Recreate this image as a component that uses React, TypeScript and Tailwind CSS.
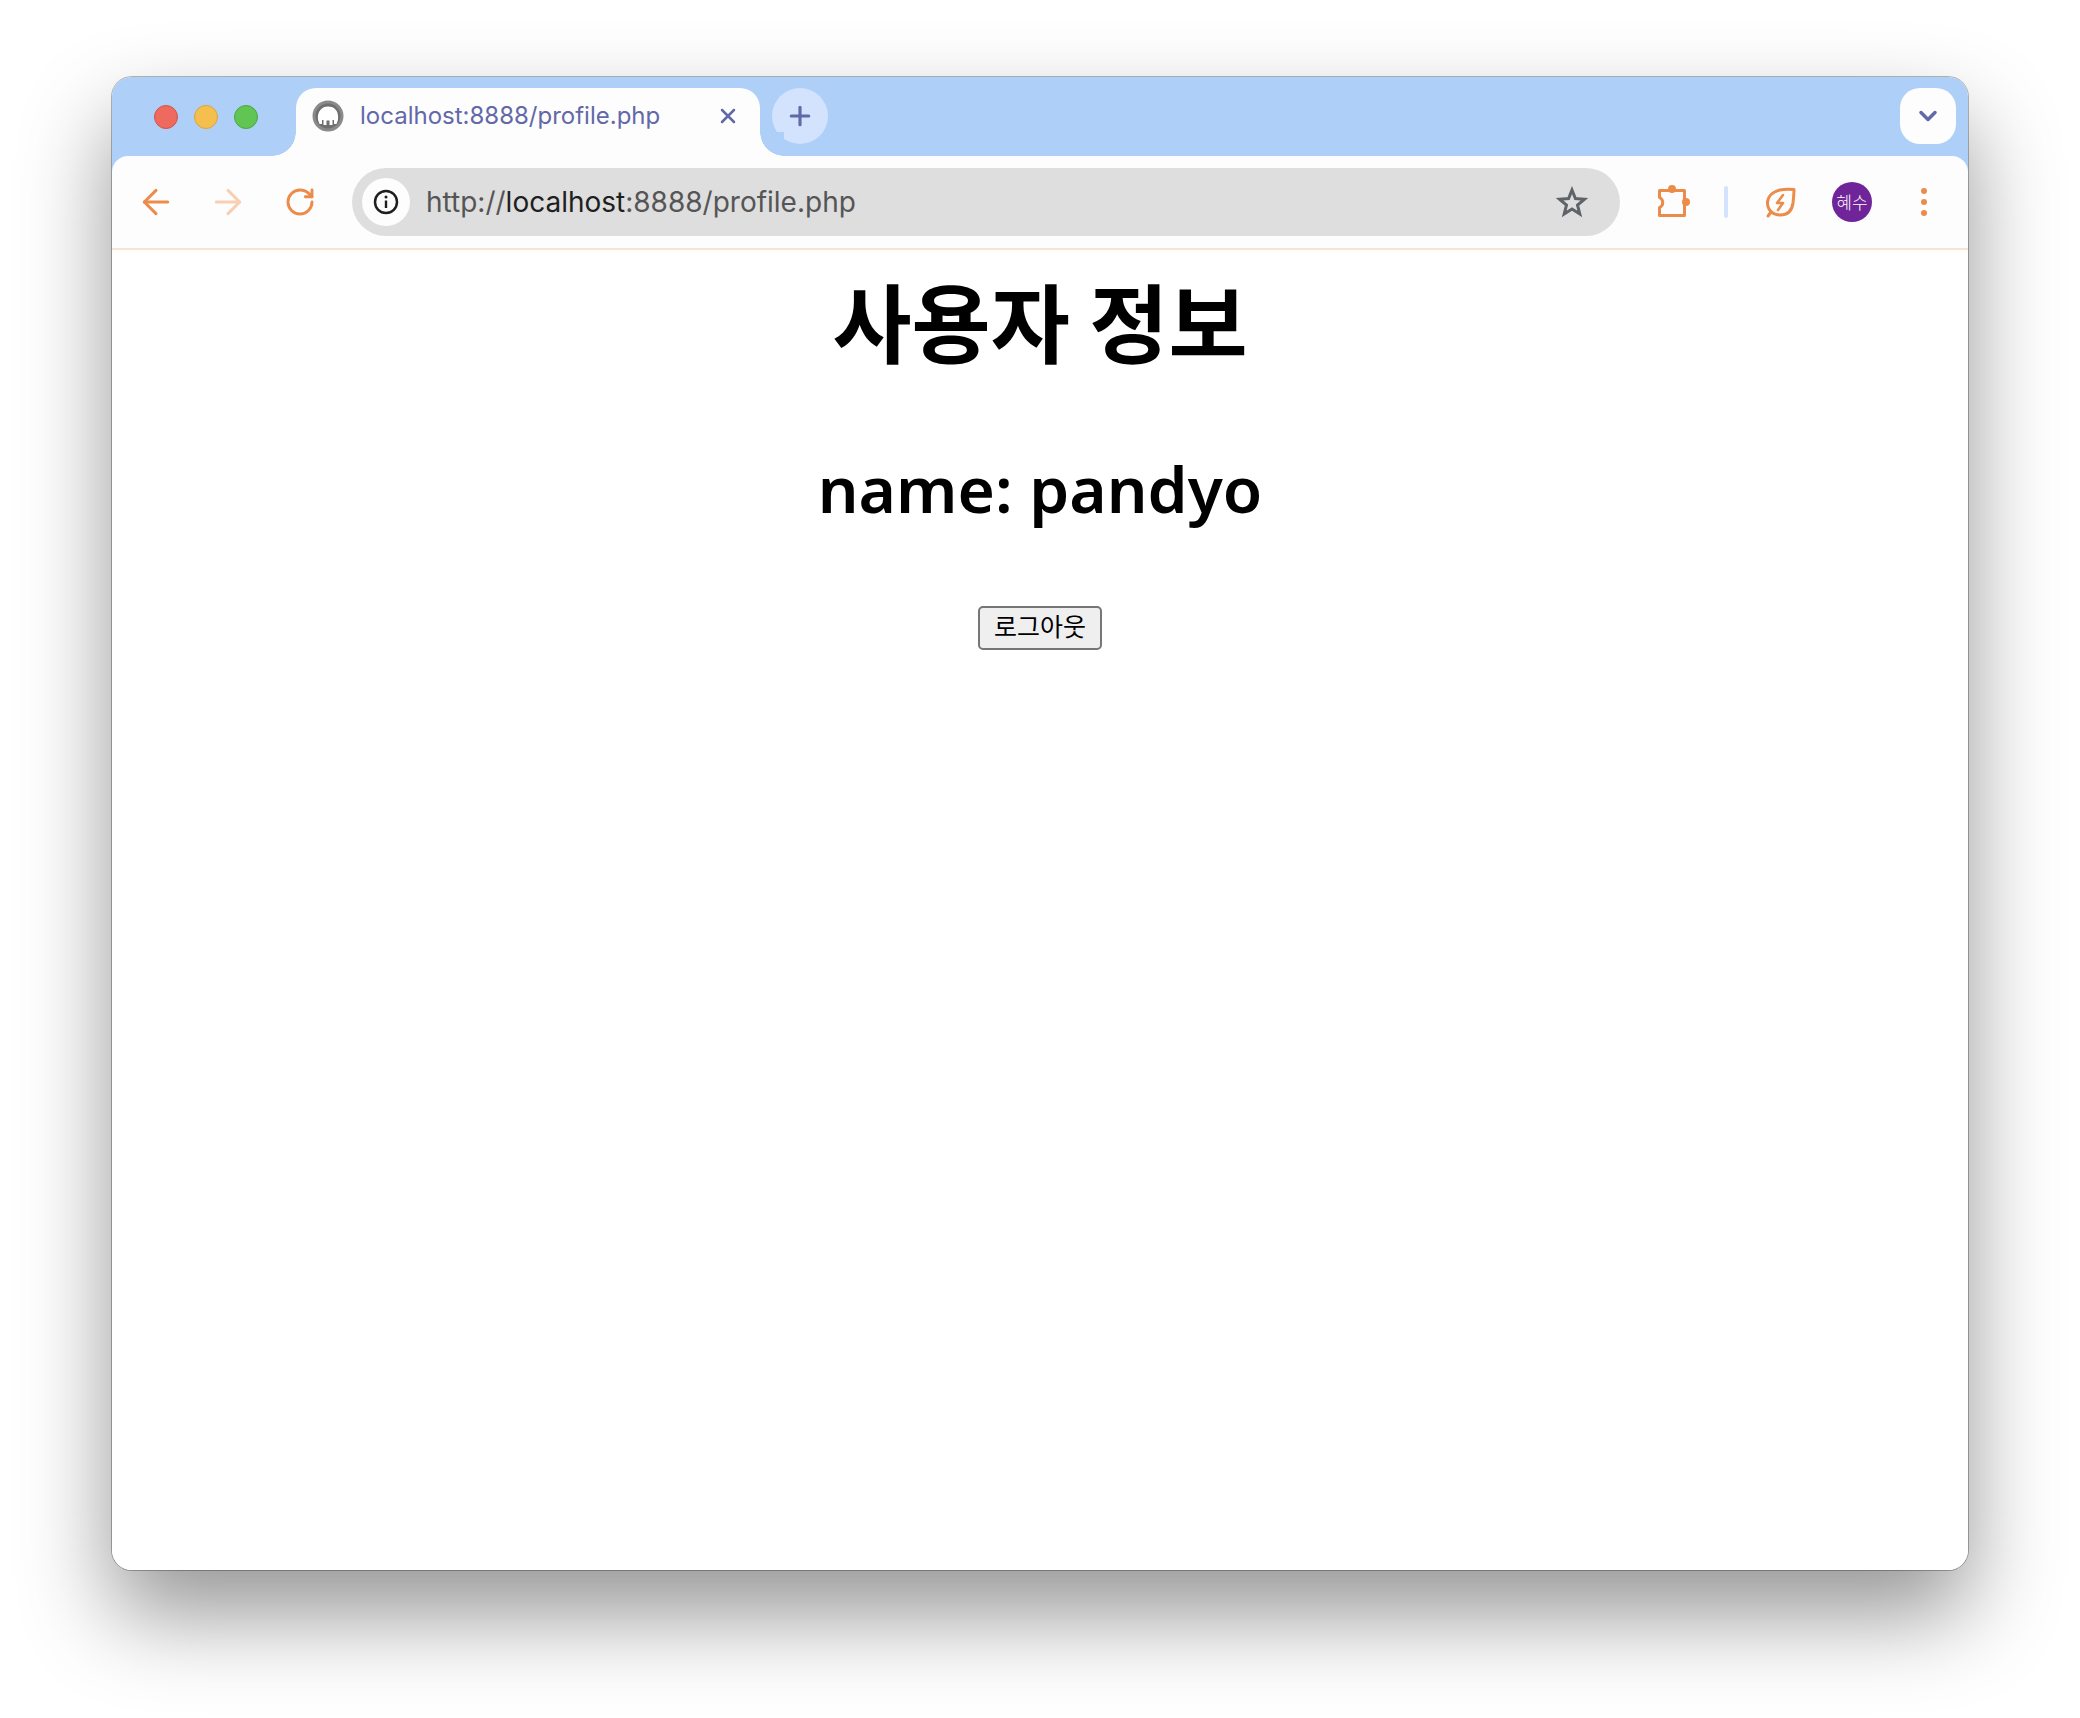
import React from "react";
import { ArrowLeft, ArrowRight, RotateCw, X, Plus, ChevronDown } from "lucide-react";

function Favicon() {
  return (
    <svg width="34" height="34" viewBox="0 0 34 34">
      <circle cx="17" cy="17" r="14" fill="#6f6f6f" stroke="#8a8a8a" strokeWidth="3" />
      <path d="M7 21 C6 12 11 7.5 17 7.5 C24 7.5 28 12 27 21 L25.5 25 H23 V21 L21.5 21 V26 H18.5 V21.5 H15.5 V26 H12.5 V21 L11 21 V25 H8.5 Z" fill="#fff" />
    </svg>
  );
}

function Puzzle() {
  return (
    <svg width="40" height="40" viewBox="0 0 40 40" fill="none">
      <path d="M7.5 8.5 H32.5 V33.5 H7.5 V25.5 A5.5 5.5 0 0 0 7.5 15.5 Z" stroke="#ec8c4b" strokeWidth="3" strokeLinejoin="round" />
      <circle cx="20" cy="7" r="4" fill="#ec8c4b" />
      <circle cx="34" cy="20" r="4" fill="#ec8c4b" />
    </svg>
  );
}

function Leaf() {
  return (
    <svg width="36" height="36" viewBox="0 0 36 36" fill="none" stroke="#ec8c4b" strokeWidth="3" strokeLinecap="round" strokeLinejoin="round">
      <path d="M32 5.5 C27 5 22 5 18 6 C10 8 5.5 13 5.5 19 C5.5 26 11 31 18 31 C25 31 30 27 31 19 C31.5 14 32 10 32 5.5 Z" />
      <path d="M9 28 L6 32" />
      <path d="M21 11 L15 19 H21 L16 26" strokeWidth="2.5" />
    </svg>
  );
}

function InfoIcon() {
  return (
    <svg width="28" height="28" viewBox="0 0 28 28" fill="none">
      <circle cx="14" cy="14" r="11" stroke="#1f1f1f" strokeWidth="2.5" />
      <rect x="12.8" y="12.5" width="2.4" height="7.5" fill="#1f1f1f" />
      <circle cx="14" cy="9" r="1.5" fill="#1f1f1f" />
    </svg>
  );
}

function StarIcon() {
  return (
    <svg className="ml-auto" width="32" height="32" viewBox="0 0 32 32" fill="none">
      <path d="M16 4 L19.4 12.6 L28.6 13.2 L21.5 19.1 L23.8 28 L16 23.1 L8.2 28 L10.5 19.1 L3.4 13.2 L12.6 12.6 Z" stroke="#5f6368" strokeWidth="3" strokeLinejoin="miter" />
    </svg>
  );
}

export default function App() {
  return (
    <div className="w-[2080px] h-[1718px] bg-white pl-[112px] pt-[77px] overflow-hidden font-['Inter','Noto_Sans_CJK_KR',sans-serif]">
      <div className="w-[1856px] h-[1493px] rounded-[20px] bg-white overflow-hidden shadow-[0_0_0_1px_rgba(0,0,0,0.28),0_44px_90px_rgba(0,0,0,0.42)] flex flex-col">
        <div className="h-[79px] bg-[#aecff8] flex pt-[11px] shrink-0">
          <div className="flex items-center gap-[16px] pl-[42px] w-[184px] h-[58px]">
            <span className="w-[24px] h-[24px] rounded-full bg-[#ee6a5f] border border-[#d2544a]" />
            <span className="w-[24px] h-[24px] rounded-full bg-[#f5bf4f] border border-[#d9a53d]" />
            <span className="w-[24px] h-[24px] rounded-full bg-[#61c554] border border-[#4aa83e]" />
          </div>
          <div className="relative w-[464px] h-[68px] bg-[#fdfdfd] rounded-t-[20px] flex items-start pt-[11px] pl-[15px]">
            <span className="absolute bottom-0 left-[-24px] w-[24px] h-[24px] bg-[radial-gradient(circle_at_0_0,#aecff8_23.5px,#fdfdfd_24px)]" />
            <span className="absolute bottom-0 right-[-24px] w-[24px] h-[24px] bg-[radial-gradient(circle_at_100%_0,#aecff8_23.5px,#fdfdfd_24px)]" />
            <Favicon />
            <span className="ml-[15px] text-[24px] leading-[34px] text-[#6268a8] whitespace-nowrap">localhost:8888/profile.php</span>
            <X className="absolute left-[420px] top-[16px] text-[#6268a8]" size={24} strokeWidth={2.5} />
          </div>
          <div className="ml-[12px] w-[56px] h-[56px] rounded-full bg-[#d3e3fd] flex items-center justify-center">
            <Plus className="text-[#6268a8]" size={30} strokeWidth={2.5} />
          </div>
          <div className="ml-auto mr-[12px] w-[56px] h-[56px] rounded-[20px] bg-[#fdfdfd] flex items-center justify-center">
            <ChevronDown className="text-[#6268a8]" size={28} strokeWidth={3} />
          </div>
        </div>
        <div className="h-[94px] shrink-0 bg-[#aecff8]">
          <div className="relative h-[94px] bg-[#fdfdfd] rounded-t-[16px] border-b-2 border-[#f8e3d4] flex items-center pb-[1px]">
            <div className="flex items-center w-[240px] pl-[24px] gap-[32px]">
              <ArrowLeft className="text-[#ec8c4b]" size={40} strokeWidth={1.8} />
              <ArrowRight className="text-[#f9cfb3]" size={40} strokeWidth={1.8} />
              <RotateCw className="ml-[4px] text-[#ec8c4b]" size={32} strokeWidth={2.2} />
            </div>
            <div className="w-[1268px] h-[68px] rounded-full bg-[#dedede] flex items-center pl-[10px] pr-[32px]">
              <span className="w-[48px] h-[48px] rounded-full bg-[#fdfdfd] flex items-center justify-center shrink-0">
                <InfoIcon />
              </span>
              <span className="ml-[16px] text-[28px] text-[#555] whitespace-nowrap">
                http://<span className="text-[#1f1f1f]">localhost</span>:8888/profile.php
              </span>
              <StarIcon />
            </div>
            <div className="flex items-center ml-[32px]">
              <Puzzle />
              <span className="ml-[32px] w-[4px] h-[32px] rounded-full bg-[#d3e3fd]" />
              <span className="ml-[34px]"><Leaf /></span>
              <span className="ml-[34px] w-[40px] h-[40px] rounded-full bg-[#6f2499] text-white text-[17px] font-light flex items-center justify-center font-['Noto_Sans_CJK_KR',sans-serif]">혜수</span>
              <span className="ml-[49px] flex flex-col gap-[5px]">
                <span className="w-[6px] h-[6px] rounded-full bg-[#ec8c4b]" />
                <span className="w-[6px] h-[6px] rounded-full bg-[#ec8c4b]" />
                <span className="w-[6px] h-[6px] rounded-full bg-[#ec8c4b]" />
              </span>
            </div>
          </div>
        </div>
        <main className="flex-1 bg-white flex flex-col items-center font-['Noto_Sans_CJK_KR',sans-serif] text-black">
          <h1 className="mt-[20px] text-[86px] leading-[100px] font-bold">사용자 정보</h1>
          <h2 className="mt-[74px] text-[64px] leading-[90px] font-semibold font-['Noto_Sans','Noto_Sans_CJK_KR',sans-serif]">name: pandyo</h2>
          <button className="mt-[72px] w-[124px] h-[44px] bg-[#efefef] border-2 border-[#767676] rounded-[5px] text-[25px] leading-[34px] pb-[6px] text-black">로그아웃</button>
        </main>
      </div>
    </div>
  );
}
